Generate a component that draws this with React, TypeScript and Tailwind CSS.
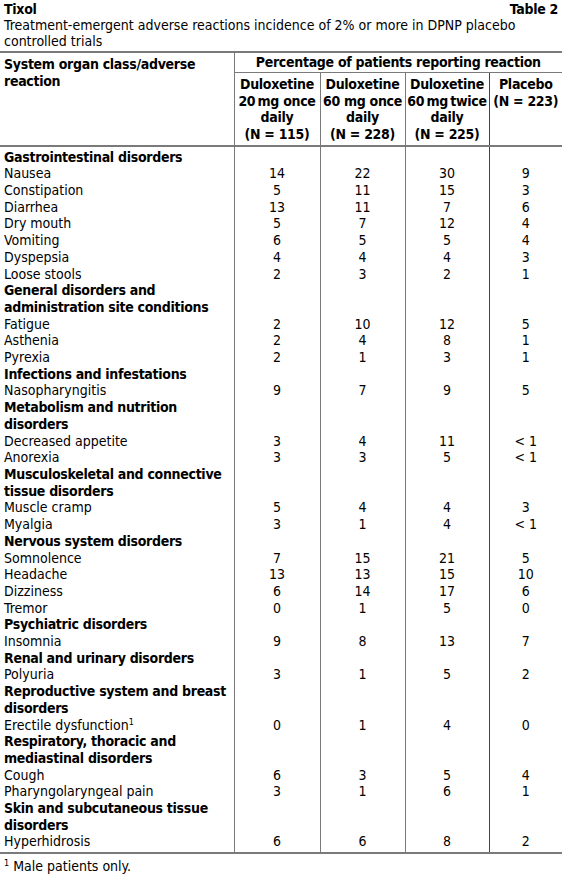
import React from "react";

type Row = { label: React.ReactNode; bold?: boolean; v?: string[] };

const Sup = () => <span className="text-[9px] leading-none align-top relative top-[1px]">1</span>;

const rows: Row[] = [
  { label: "Gastrointestinal disorders", bold: true },
  { label: "Nausea", v: ["14", "22", "30", "9"] },
  { label: "Constipation", v: ["5", "11", "15", "3"] },
  { label: "Diarrhea", v: ["13", "11", "7", "6"] },
  { label: "Dry mouth", v: ["5", "7", "12", "4"] },
  { label: "Vomiting", v: ["6", "5", "5", "4"] },
  { label: "Dyspepsia", v: ["4", "4", "4", "3"] },
  { label: "Loose stools", v: ["2", "3", "2", "1"] },
  { label: <>General disorders and<br />administration site conditions</>, bold: true },
  { label: "Fatigue", v: ["2", "10", "12", "5"] },
  { label: "Asthenia", v: ["2", "4", "8", "1"] },
  { label: "Pyrexia", v: ["2", "1", "3", "1"] },
  { label: "Infections and infestations", bold: true },
  { label: "Nasopharyngitis", v: ["9", "7", "9", "5"] },
  { label: <>Metabolism and nutrition<br />disorders</>, bold: true },
  { label: "Decreased appetite", v: ["3", "4", "11", "< 1"] },
  { label: "Anorexia", v: ["3", "3", "5", "< 1"] },
  { label: <>Musculoskeletal and connective<br />tissue disorders</>, bold: true },
  { label: "Muscle cramp", v: ["5", "4", "4", "3"] },
  { label: "Myalgia", v: ["3", "1", "4", "< 1"] },
  { label: "Nervous system disorders", bold: true },
  { label: "Somnolence", v: ["7", "15", "21", "5"] },
  { label: "Headache", v: ["13", "13", "15", "10"] },
  { label: "Dizziness", v: ["6", "14", "17", "6"] },
  { label: "Tremor", v: ["0", "1", "5", "0"] },
  { label: "Psychiatric disorders", bold: true },
  { label: "Insomnia", v: ["9", "8", "13", "7"] },
  { label: "Renal and urinary disorders", bold: true },
  { label: "Polyuria", v: ["3", "1", "5", "2"] },
  { label: <>Reproductive system and breast<br />disorders</>, bold: true },
  { label: <>Erectile dysfunction<Sup /></>, v: ["0", "1", "4", "0"] },
  { label: <>Respiratory, thoracic and<br />mediastinal disorders</>, bold: true },
  { label: "Cough", v: ["6", "3", "5", "4"] },
  { label: "Pharyngolaryngeal pain", v: ["3", "1", "6", "1"] },
  { label: <>Skin and subcutaneous tissue<br />disorders</>, bold: true },
  { label: "Hyperhidrosis", v: ["6", "6", "8", "2"] },
];

const font = {
  fontFamily: '"DejaVu Sans Condensed", "Liberation Sans Narrow", "Liberation Sans", Arial, sans-serif',
};

const line = "border-[#7a7a7a]";

export default function App() {
  return (
    <div className="w-[562px] bg-white text-black text-[14px] leading-[16.7px]" style={font}>
      <div className="flex justify-between px-1 pt-[1px] font-bold tracking-[-0.3px]">
        <span>Tixol</span>
        <span>Table 2</span>
      </div>
      <div className="px-1 whitespace-nowrap -mt-[1px]">
        Treatment-emergent adverse reactions incidence of 2% or more in DPNP placebo
        <br />
        controlled trials
      </div>
      <table className="w-full border-collapse table-fixed mt-[1px]">
        <colgroup>
          <col className="w-[234px]" />
          <col className="w-[86px]" />
          <col className="w-[85px]" />
          <col className="w-[84px]" />
          <col className="w-[73px]" />
        </colgroup>
        <thead className="font-bold tracking-[-0.3px] whitespace-nowrap">
          <tr className={`border-t-2 ${line}`}>
            <th rowSpan={2} className={`align-top text-left font-bold pl-1 pt-[3px] border-b-2 ${line}`}>
              System organ class/adverse
              <br />
              reaction
            </th>
            <th colSpan={4} className={`font-bold text-center border-l border-b ${line} pt-[1px] pb-[1px]`}>
              Percentage of patients reporting reaction
            </th>
          </tr>
          <tr className={`border-b-2 ${line}`}>
            <th className={`font-bold text-center align-top border-l ${line} pt-[3px] pb-[2px]`}>
              Duloxetine
              <br />
              20&#8201;mg once
              <br />
              daily
              <br />
              (N = 115)
            </th>
            <th className={`font-bold text-center align-top border-l ${line} pt-[3px] pb-[2px]`}>
              Duloxetine
              <br />
              60 mg once
              <br />
              daily
              <br />
              (N = 228)
            </th>
            <th className={`font-bold text-center align-top border-l ${line} pt-[3px] pb-[2px]`}>
              Duloxetine
              <br />
              60&#8201;mg&#8201;twice
              <br />
              daily
              <br />
              (N = 225)
            </th>
            <th className="font-bold text-center align-top border-l border-[#444] pt-[3px] pb-[2px]">
              Placebo
              <br />
              (N = 223)
            </th>
          </tr>
        </thead>
        <tbody className={`border-b-2 ${line}`}>
          {rows.map((r, i) => {
            const first = i === 0;
            const last = i === rows.length - 1;
            const pad = first ? "pt-[2px]" : last ? "pb-[2px]" : "";
            return (
              <tr key={i}>
                <td
                  className={`align-bottom pl-1 whitespace-nowrap ${r.bold ? "font-bold tracking-[-0.3px]" : ""} ${pad}`}
                >
                  {r.label}
                </td>
                {[0, 1, 2, 3].map((c) => (
                  <td
                    key={c}
                    className={`align-bottom text-center border-l ${c === 3 ? "border-[#444]" : line} ${pad}`}
                  >
                    {r.v ? r.v[c] : ""}
                  </td>
                ))}
              </tr>
            );
          })}
        </tbody>
      </table>
      <div className="px-1 pt-[4px]">
        <span className="text-[9px] leading-none align-top relative top-[1px]">1</span> Male patients only.
      </div>
    </div>
  );
}
